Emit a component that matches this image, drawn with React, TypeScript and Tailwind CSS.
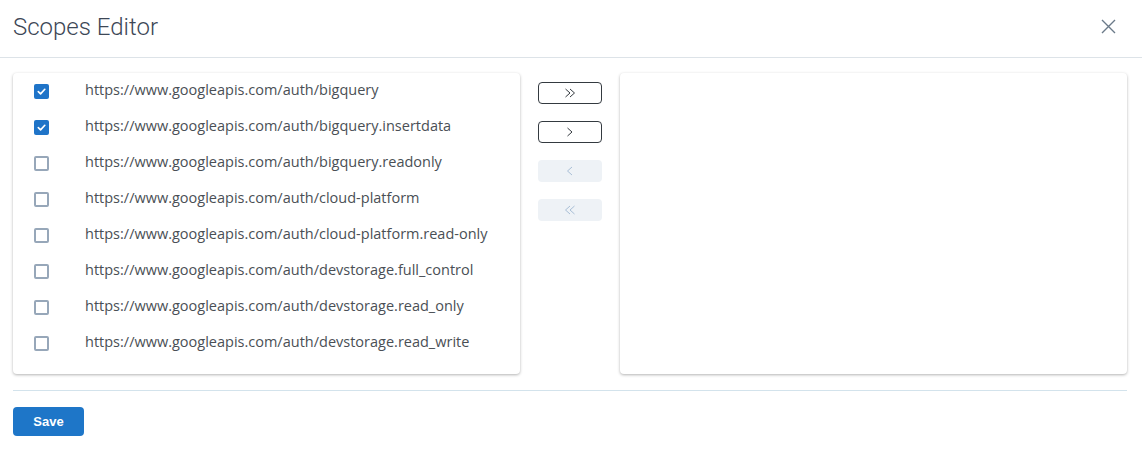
import React from "react";

const scopes = [
  { url: "https://www.googleapis.com/auth/bigquery", checked: true },
  { url: "https://www.googleapis.com/auth/bigquery.insertdata", checked: true },
  { url: "https://www.googleapis.com/auth/bigquery.readonly", checked: false },
  { url: "https://www.googleapis.com/auth/cloud-platform", checked: false },
  { url: "https://www.googleapis.com/auth/cloud-platform.read-only", checked: false },
  { url: "https://www.googleapis.com/auth/devstorage.full_control", checked: false },
  { url: "https://www.googleapis.com/auth/devstorage.read_only", checked: false },
  { url: "https://www.googleapis.com/auth/devstorage.read_write", checked: false },
];

function Checkbox({ checked }: { checked: boolean }) {
  if (checked) {
    return (
      <span className="flex h-[15px] w-[15px] items-center justify-center rounded-[2px] bg-[#1f74c8]">
        <svg width="11" height="11" viewBox="0 0 12 12" fill="none">
          <path d="M2.5 6.2 L5 8.6 L9.6 3.6" stroke="white" strokeWidth="1.8" strokeLinecap="round" strokeLinejoin="round" />
        </svg>
      </span>
    );
  }
  return <span className="block h-[15px] w-[15px] rounded-[2px] border-2 border-[#97a7b9] bg-white" />;
}

function Chevron({ dir, double }: { dir: "right" | "left"; double?: boolean }) {
  const single = dir === "right" ? "M1.5 1 L6 5 L1.5 9" : "M6 1 L1.5 5 L6 9";
  return (
    <svg width={double ? 13 : 8} height="10" viewBox={double ? "0 0 13 10" : "0 0 8 10"} fill="none">
      <path d={single} stroke="currentColor" strokeWidth="1" />
      {double && (
        <path
          d={dir === "right" ? "M6 1 L10.5 5 L6 9" : "M10.5 1 L6 5 L10.5 9"}
          stroke="currentColor"
          strokeWidth="1"
        />
      )}
    </svg>
  );
}

export default function App() {
  return (
    <div className="h-[451px] w-[1142px] bg-white font-['Open_Sans',sans-serif]">
      <div className="flex h-[58px] items-center justify-between border-b border-[#dde3e8] pl-[13px] pr-[26px]">
        <h1 className="mt-[-4px] font-['Roboto',sans-serif] text-[24px] font-light text-[#3d4756]">Scopes Editor</h1>
        <svg width="15" height="15" viewBox="0 0 15 15" fill="none" className="mt-[-5px]">
          <path d="M1 1 L14 14 M14 1 L1 14" stroke="#6b7a89" strokeWidth="1.4" />
        </svg>
      </div>
      <div className="flex pl-[13px] pt-[15px]">
        <div className="h-[301px] w-[507px] rounded-[4px] bg-white pb-[13px] shadow-[0_1px_3px_rgba(0,0,0,0.3)]">
          {scopes.map((s) => (
            <div key={s.url} className="flex h-[36px] items-center">
              <div className="ml-[21px] w-[51px]">
                <Checkbox checked={s.checked} />
              </div>
              <span className="mt-[-3px] text-[14.5px] text-[#4a4f55]">{s.url}</span>
            </div>
          ))}
        </div>
        <div className="ml-[18px] flex w-[64px] flex-col gap-[17px] pt-[9px]">
          <button className="flex h-[22px] items-center justify-center rounded-[4px] border border-[#343a40] bg-white text-[#343a40]">
            <Chevron dir="right" double />
          </button>
          <button className="flex h-[22px] items-center justify-center rounded-[4px] border border-[#343a40] bg-white text-[#343a40]">
            <Chevron dir="right" />
          </button>
          <button className="flex h-[22px] items-center justify-center rounded-[4px] bg-[#eef2f6] text-[#a9bfd6]">
            <Chevron dir="left" />
          </button>
          <button className="flex h-[22px] items-center justify-center rounded-[4px] bg-[#eef2f6] text-[#a9bfd6]">
            <Chevron dir="left" double />
          </button>
        </div>
        <div className="ml-[18px] h-[301px] w-[507px] rounded-[4px] bg-white shadow-[0_1px_3px_rgba(0,0,0,0.3)]" />
      </div>
      <div className="mx-[13px] mt-[16px] w-[1114px] border-t border-[#d3e3ec]" />
      <div className="pl-[13px] pt-[16px]">
        <button className="flex h-[29px] w-[71px] items-center justify-center rounded-[4px] bg-[#1e76c8] font-['Liberation_Sans',sans-serif] text-[13px] font-bold text-white">
          Save
        </button>
      </div>
    </div>
  );
}
